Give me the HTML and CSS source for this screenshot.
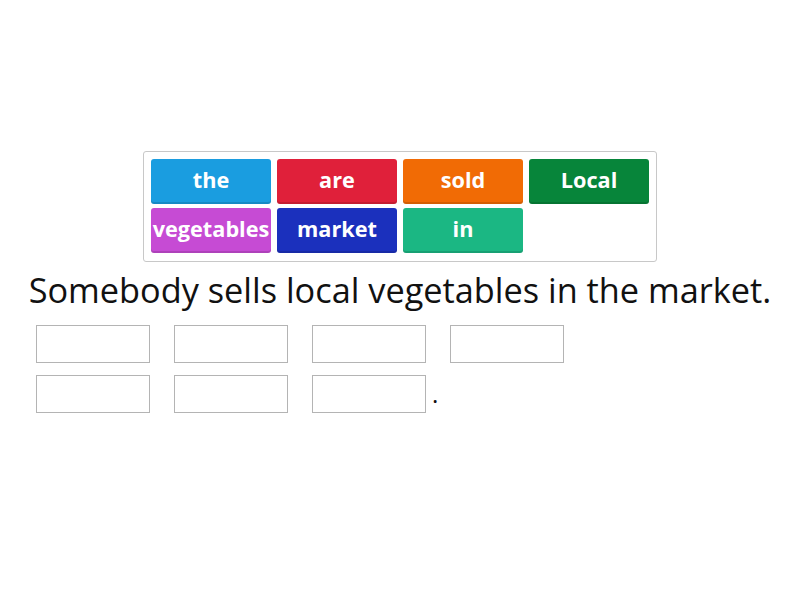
FILE: index.html
```html
<!DOCTYPE html>
<html>
<head>
  <title>Unjumble</title>
  <link rel="stylesheet" href="styles.css">
</head>
<body>
  <div class="game">
    <div class="word-bank">
      <div class="tile blue">the</div>
      <div class="tile red">are</div>
      <div class="tile orange">sold</div>
      <div class="tile green">Local</div>
      <div class="tile purple">vegetables</div>
      <div class="tile navy">market</div>
      <div class="tile teal">in</div>
    </div>

    <div class="prompt">Somebody sells local vegetables in the market.</div>

    <div class="answer">
      <div class="slot"><div class="blank"></div></div>
      <div class="slot"><div class="blank"></div></div>
      <div class="slot"><div class="blank"></div></div>
      <div class="slot"><div class="blank"></div></div>
      <div class="slot"><div class="blank"></div></div>
      <div class="slot"><div class="blank"></div></div>
      <div class="slot"><div class="blank"></div><span class="stop">.</span></div>
    </div>
  </div>
</body>
</html>
```

FILE: styles.css
```css
* {
  margin: 0;
  padding: 0;
  box-sizing: border-box;
  font-family: 'Open Sans', sans-serif;
}

body {
  background: #fff;
  color: #111;
}

.game {
  padding-top: 151px;
  display: flex;
  flex-direction: column;
  align-items: center;
}

.word-bank {
  width: 514px;
  padding: 7px 8px 8px 7px;
  border: 1px solid #c8c8c8;
  border-radius: 3px;
  display: grid;
  grid-template-columns: repeat(4, 120px);
  column-gap: 6px;
  row-gap: 4px;
}

.tile {
  height: 45px;
  padding-bottom: 5px;
  border-radius: 3px;
  color: #fff;
  font-weight: 700;
  font-size: 21.7px;
  display: flex;
  align-items: center;
  justify-content: center;
  box-shadow: inset 0 -2px 0 rgba(0, 0, 0, 0.12);
  white-space: nowrap;
}

.blue { background: #1a9de0; }
.red { background: #e0203a; }
.orange { background: #f16b05; }
.green { background: #07853a; }
.purple { background: #c64bd4; }
.navy { background: #1b30bd; }
.teal { background: #1bb783; }

.prompt {
  margin-top: 4px;
  font-size: 34.3px;
  text-align: center;
  white-space: nowrap;
}

.answer {
  align-self: flex-start;
  width: 600px;
  margin-top: 12px;
  padding-left: 36px;
  display: flex;
  flex-wrap: wrap;
  column-gap: 24px;
  row-gap: 12px;
}

.slot {
  display: flex;
  align-items: flex-end;
}

.blank {
  width: 114px;
  height: 38px;
  border: 1px solid #b4b4b4;
}

.stop {
  font-size: 24px;
  line-height: 24px;
  margin-left: 6px;
  margin-bottom: 7px;
}
```
